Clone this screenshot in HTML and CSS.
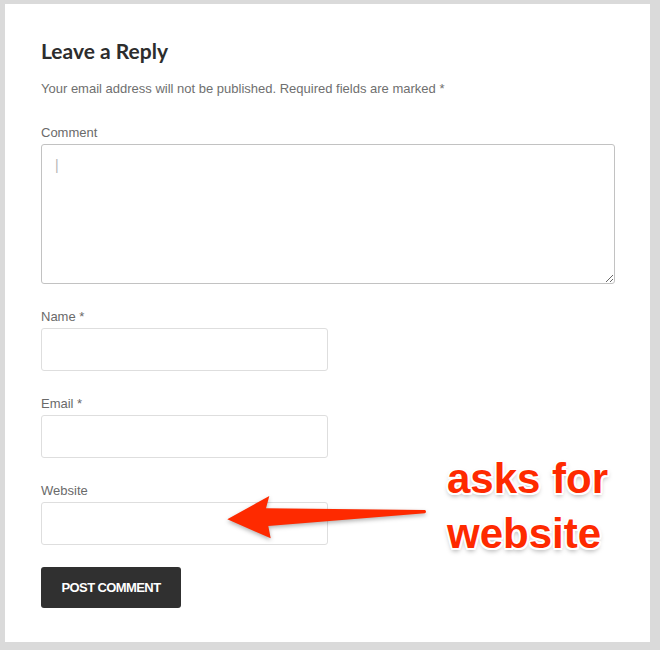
FILE: index.html
```html
<!DOCTYPE html>
<html lang="en">
<head>
    <meta charset="UTF-8">
    <meta name="viewport" content="width=device-width, initial-scale=1.0">
    <title>Leave a Reply</title>
    <link rel="stylesheet" href="styles.css">
</head>
<body>
    <div class="panel">
        <h3 class="reply-title">Leave a Reply</h3>
        <p class="notes">Your email address will not be published. Required fields are marked *</p>

        <form class="comment-form">
            <div class="field">
                <label for="comment">Comment</label>
                <textarea id="comment" placeholder="|"></textarea>
            </div>
            <div class="field">
                <label for="author">Name *</label>
                <input type="text" id="author">
            </div>
            <div class="field">
                <label for="email">Email *</label>
                <input type="text" id="email">
            </div>
            <div class="field">
                <label for="url">Website</label>
                <input type="text" id="url">
            </div>
            <button type="button" class="submit">POST COMMENT</button>
        </form>

        <!-- screenshot annotation -->
        <svg class="arrow" width="220" height="60" viewBox="0 0 220 60">
            <path d="M7.3 29.3 L49.3 6 L46 18.3 L205 20 Q207 21.6 205 23.3 L48.3 36 L50.7 48.3 Z" fill="#fe2a00"/>
        </svg>
        <div class="note">asks for<br>website</div>
    </div>
</body>
</html>
```

FILE: styles.css
```css
body {
    margin: 0;
    padding: 4px 10px 8px 5px;
    background-color: #dadada;
    font-family: "Liberation Sans", Arial, sans-serif;
}
.panel {
    position: relative;
    height: 638px;
    box-sizing: border-box;
    padding: 34px 36px 0 36px;
    background-color: #fff;
}
.reply-title {
    margin: 0;
    font-family: Lato, "Liberation Sans", sans-serif;
    font-size: 21px;
    font-weight: bold;
    line-height: 1.2;
    color: #2d2d2d;
}
.notes {
    margin: 15px 0 0 0;
    font-size: 13px;
    line-height: 21px;
    color: #6f6f6f;
}
.comment-form {
    margin-top: 23px;
}
.field {
    margin-bottom: 22px;
}
.field label {
    display: block;
    margin-bottom: 1px;
    font-size: 13px;
    line-height: 21px;
    color: #6a6a6a;
}
.field input[type="text"] {
    display: block;
    width: 287px;
    height: 43px;
    box-sizing: border-box;
    border: 1px solid #dedede;
    border-radius: 3px;
    background: #fff;
}
.field textarea {
    display: block;
    width: 574px;
    height: 140px;
    box-sizing: border-box;
    padding: 11px 13px;
    border: 1px solid #c2c2c2;
    border-radius: 3px;
    font-family: "Liberation Sans", Arial, sans-serif;
    font-size: 14px;
    line-height: 18px;
}
.field textarea::placeholder {
    color: #b5b5b5;
}
.submit {
    display: block;
    width: 140px;
    height: 41px;
    padding: 0;
    border: none;
    border-radius: 3px;
    background-color: #303030;
    color: #fff;
    font-family: "Liberation Sans", Arial, sans-serif;
    font-size: 13px;
    font-weight: bold;
    letter-spacing: -0.6px;
}
.arrow {
    position: absolute;
    left: 215px;
    top: 486px;
    overflow: visible;
    filter: drop-shadow(0 2px 2px rgba(0, 0, 0, 0.3));
}
.note {
    position: absolute;
    left: 442px;
    top: 447px;
    font-family: "Liberation Sans", Arial, sans-serif;
    font-size: 42px;
    font-weight: bold;
    line-height: 55px;
    color: #fe2a00;
    text-shadow:
        -2px 0 0 #fff, 2px 0 0 #fff, 0 -2px 0 #fff, 0 2px 0 #fff,
        -1.5px -1.5px 0 #fff, 1.5px -1.5px 0 #fff, -1.5px 1.5px 0 #fff, 1.5px 1.5px 0 #fff,
        0 3px 5px rgba(0, 0, 0, 0.35);
}
```
